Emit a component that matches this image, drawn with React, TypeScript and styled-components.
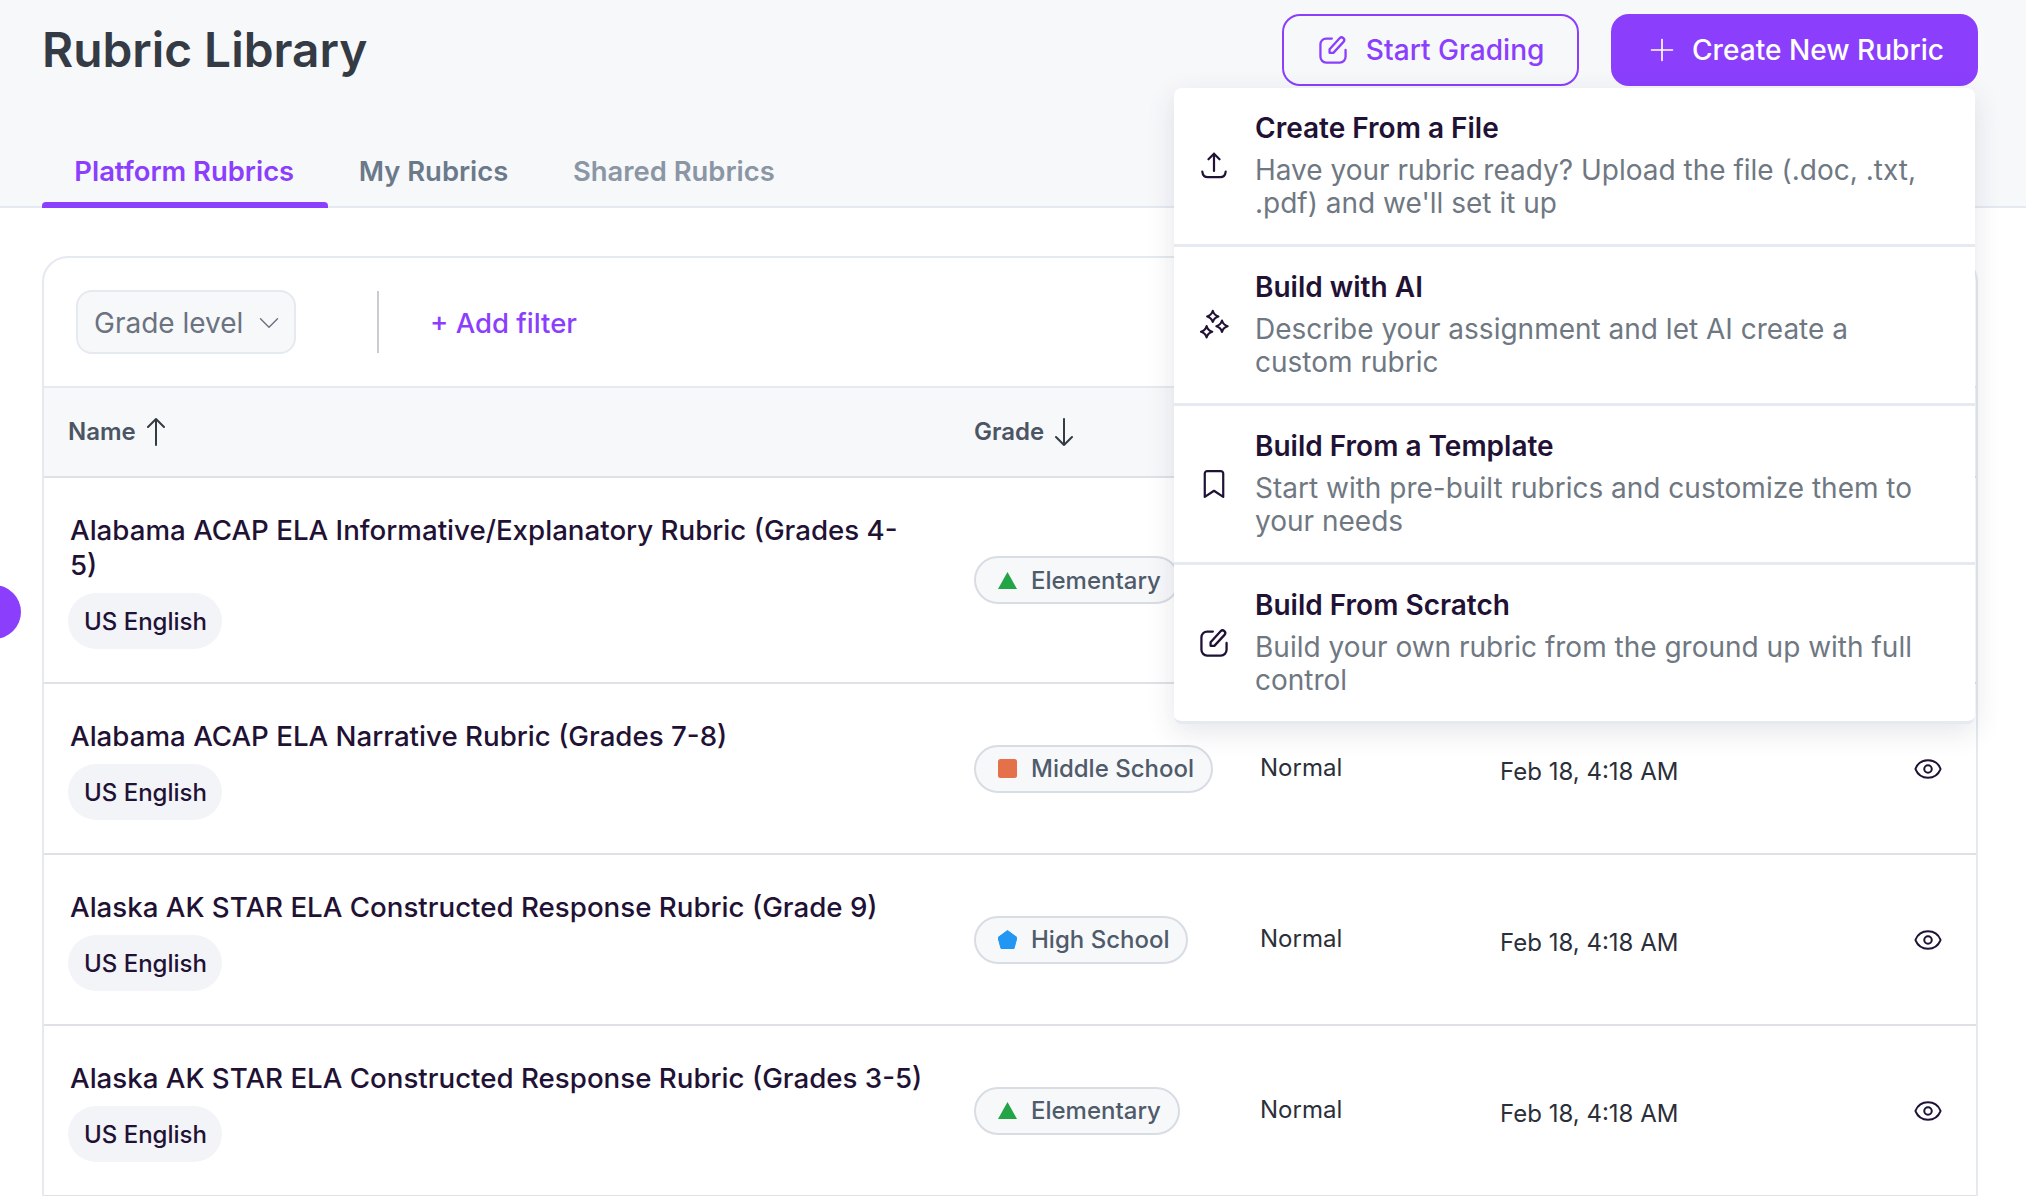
import { FC } from 'react';
import styled, { createGlobalStyle } from 'styled-components';
import { ChevronDown, Eye, Plus } from 'lucide-react';

const purple = '#8b3ffd';

const GlobalStyle = createGlobalStyle`
    html, body {
        margin: 0;
        height: 1196px;
        overflow: hidden;
        background: #fff;
        font-family: Inter, "Noto Sans", sans-serif;
    }
    * {
        box-sizing: border-box;
    }
`;

const Page = styled.div`
    position: relative;
    height: 1196px;
    overflow: hidden;
`;

const Header = styled.header`
    height: 208px;
    background: #f7f8fa;
    border-bottom: 2px solid #e5e9f0;
    padding: 14px 48px 0 42px;
    display: flex;
    flex-direction: column;
`;

const TopRow = styled.div`
    display: flex;
    justify-content: space-between;
    align-items: flex-start;
`;

const Title = styled.h1`
    margin: 0;
    padding-top: 7px;
    font-size: 47.8px;
    line-height: 58px;
    font-weight: 600;
    color: #343b44;
`;

const Actions = styled.div`
    position: relative;
    display: flex;
    gap: 32px;
`;

const ActionButton = styled.button<{ $solid?: boolean }>`
    height: 72px;
    display: flex;
    align-items: center;
    border-radius: 18px;
    border: 2px solid ${purple};
    background: ${({ $solid }) => ($solid ? purple : '#f7f8fa')};
    color: ${({ $solid }) => ($solid ? '#fff' : purple)};
    font: 500 28.1px Inter, sans-serif;
    padding: ${({ $solid }) => ($solid ? '0 32px 0 31px' : '0 32px 0 33px')};
    gap: ${({ $solid }) => ($solid ? '12.5px' : '17px')};
    white-space: nowrap;
`;

const Tabs = styled.nav`
    display: flex;
    margin-top: 54px;
    height: 66px;
`;

const Tab = styled.div<{ $color: string; $active?: boolean }>`
    position: relative;
    padding: 12.5px 32.3px 0;
    font-size: 27.4px;
    line-height: 36px;
    font-weight: 600;
    color: ${({ $color }) => $color};

    ${({ $active }) =>
        $active &&
        `
        &::after {
            content: '';
            position: absolute;
            left: 0;
            right: -2px;
            bottom: -2px;
            height: 6px;
            border-radius: 4px 4px 0 0;
            background: ${purple};
        }
    `}
`;

const Menu = styled.div`
    position: absolute;
    top: 74px;
    right: 3px;
    width: 801px;
    background: #fff;
    border-radius: 8px;
    border-bottom: 3px solid #e5e9f0;
    box-shadow: 0 8px 28px rgba(40, 50, 70, 0.12);
    z-index: 5;
`;

const MenuItem = styled.div`
    height: 159px;
    display: flex;
    align-items: center;
    padding: 0 40px 2px 24px;
    border-bottom: 3px solid #e5e9f0;

    &:last-child {
        height: 156px;
        border-bottom: 0;
    }
`;

const MenuIcon = styled.div`
    width: 57px;
    flex: none;
    display: flex;
    color: #1f1235;
    padding-top: 2px;
`;

const MenuTitle = styled.div`
    font-size: 28px;
    line-height: 36px;
    font-weight: 600;
    color: #1f1235;
    margin-bottom: 8px;
`;

const MenuDesc = styled.div`
    font-size: 28px;
    line-height: 33.5px;
    color: #6f7882;
`;

const Main = styled.main`
    padding: 48px 48px 0 42px;
`;

const Card = styled.section`
    border: 2px solid #e5e9f0;
    border-radius: 26px 26px 0 0;
    background: #fff;
`;

const FilterBar = styled.div`
    height: 130px;
    display: flex;
    align-items: center;
    padding-left: 32px;
    border-bottom: 2px solid #e5e9f0;
`;

const GradeSelect = styled.div`
    width: 220px;
    height: 64px;
    display: flex;
    align-items: center;
    justify-content: space-between;
    padding: 2px 8px 0 16px;
    background: #f7f8fa;
    border: 2px solid #e5e9f0;
    border-radius: 16px;
    font-size: 28px;
    color: #6b7280;
`;

const Divider = styled.div`
    width: 2px;
    height: 62px;
    margin: 0 51px 0 81px;
    background: #c9cdd3;
`;

const AddFilter = styled.div`
    padding-top: 2px;
    font-size: 27.5px;
    font-weight: 500;
    color: ${purple};
`;

const TableHead = styled.div`
    height: 90px;
    display: flex;
    align-items: center;
    background: #f7f8fa;
    border-bottom: 2px solid #dfe1e6;
`;

const HeadCell = styled.div<{ $width: number; $pad: number }>`
    width: ${({ $width }) => $width}px;
    padding-left: ${({ $pad }) => $pad}px;
    padding-bottom: 1px;
    display: flex;
    align-items: center;
    gap: 10px;
    font-size: 24px;
    font-weight: 600;
    color: #4b5563;
`;

const Row = styled.div`
    display: grid;
    grid-template-columns: 930px 286px 240px 1fr auto;
    align-items: center;
    border-bottom: 2px solid #dfe1e6;
`;

const NameCell = styled.div`
    padding: 35px 0 33px 24px;
`;

const RubricName = styled.div`
    max-width: 855px;
    padding-left: 2px;
    font-size: 27.7px;
    line-height: 35px;
    font-weight: 500;
    color: #1f1235;
`;

const LangChip = styled.span`
    display: inline-flex;
    align-items: center;
    height: 56px;
    margin-top: 10px;
    padding: 0 15.5px 0 16px;
    border-radius: 28px;
    background: #f3f4f8;
    font-size: 24px;
    font-weight: 500;
    color: #1f1235;
`;

const GradePill = styled.span`
    justify-self: start;
    display: inline-flex;
    align-items: center;
    gap: 14px;
    height: 48px;
    padding: 0 17px 0 22px;
    border: 2px solid #d8dce3;
    border-radius: 24px;
    background: #f7f8fa;
    font-size: 24px;
    font-weight: 500;
    color: #4f5b6b;
`;

const TextCell = styled.div<{ $shift: number }>`
    margin-top: ${({ $shift }) => $shift}px;
    font-size: 24px;
    color: #2b2f3a;
`;

const EyeCell = styled.div`
    display: flex;
    padding-right: 33px;
    color: #1f1235;
`;

const SideBlob = styled.div`
    position: absolute;
    left: -33px;
    top: 585px;
    width: 54px;
    height: 54px;
    border-radius: 50%;
    background: ${purple};
`;

const EditIcon: FC = () => (
    <svg width="32" height="32" viewBox="-1 -1 28 28" fill="none" stroke="currentColor" strokeWidth="2" strokeLinecap="round" strokeLinejoin="round">
        <path d="M12 3H7a5 5 0 0 0-5 5v11a5 5 0 0 0 5 5h12a5 5 0 0 0 5-5v-6" />
        <path d="M10 15.500v-3.200L18.800 2.800a2.300 2.300 0 0 1 3.400 3.100L13.300 15.500z" />
    </svg>
);

const UploadIcon = () => (
    <svg width="32" height="32" viewBox="0 0 26 26" fill="none" stroke="currentColor" strokeWidth="1.8" strokeLinecap="round" strokeLinejoin="round">
        <path d="M13 3v14M8.500 7.500 13 3l4.500 4.500" />
        <path d="M3.500 17.500c.3 3 1.900 4.500 4.500 4.500h10c2.600 0 4.200-1.500 4.500-4.500" />
    </svg>
);

const star = (x: number, y: number, r: number) =>
    `M${x} ${y - r}Q${x + 1} ${y - 1} ${x + r} ${y}Q${x + 1} ${y + 1} ${x} ${y + r}Q${x - 1} ${y + 1} ${x - r} ${y}Q${x - 1} ${y - 1} ${x} ${y - r}z`;

const SparkleIcon = () => (
    <svg width="32" height="32" viewBox="0 0 26 26" fill="none" stroke="currentColor" strokeWidth="1.7" strokeLinejoin="round">
        <path d={star(12, 6, 4.6)} />
        <path d={star(7, 18.5, 4.6)} />
        <path d={star(19.5, 14, 4.6)} />
    </svg>
);

const BookmarkIcon = () => (
    <svg width="32" height="32" viewBox="0 0 26 26" fill="none" stroke="currentColor" strokeWidth="1.8" strokeLinecap="round" strokeLinejoin="round">
        <path d="M7.500 2.500a2 2 0 0 0-2 2v19l7.500-5 7.500 5v-19a2 2 0 0 0-2-2z" />
    </svg>
);

const SortArrow: FC<{ down?: boolean }> = ({ down }) => (
    <svg width="20" height="28" viewBox="0 0 20 28" fill="none" stroke="#343b44" strokeWidth="2" strokeLinecap="round" strokeLinejoin="round">
        {down ? <path d="M10 1v26M2 19l8 8 8-8" /> : <path d="M10 1v26M2 9l8-8 8 8" />}
    </svg>
);

const GradeMark: FC<{ level: string }> = ({ level }) => {
    if (level === 'Middle School') {
        return (
            <svg width="19" height="19" viewBox="0 0 19 19">
                <rect width="19" height="19" rx="2.5" fill="#e5714a" />
            </svg>
        );
    }
    if (level === 'High School') {
        return (
            <svg width="19" height="19" viewBox="0 0 19 19">
                <path d="M9.500 0.500 19 7.500 16 18.500H3L0 7.500z" fill="#2196f3" stroke="#2196f3" strokeLinejoin="round" />
            </svg>
        );
    }
    return (
        <svg width="19" height="19" viewBox="0 0 19 19">
            <path d="M9.500 1 19 18H0z" fill="#22a447" />
        </svg>
    );
};

const menuItems = [
    { title: 'Create From a File', description: "Have your rubric ready? Upload the file (.doc, .txt, .pdf) and we'll set it up", icon: <UploadIcon /> },
    { title: 'Build with AI', description: 'Describe your assignment and let AI create a custom rubric', icon: <SparkleIcon /> },
    { title: 'Build From a Template', description: 'Start with pre-built rubrics and customize them to your needs', icon: <BookmarkIcon /> },
    { title: 'Build From Scratch', description: 'Build your own rubric from the ground up with full control', icon: <EditIcon /> },
];

const rubrics = [
    { name: 'Alabama ACAP ELA Informative/Explanatory Rubric (Grades 4-5)', level: 'Elementary' },
    { name: 'Alabama ACAP ELA Narrative Rubric (Grades 7-8)', level: 'Middle School' },
    { name: 'Alaska AK STAR ELA Constructed Response Rubric (Grade 9)', level: 'High School' },
    { name: 'Alaska AK STAR ELA Constructed Response Rubric (Grades 3-5)', level: 'Elementary' },
];

const App: FC = () => (
    <Page>
        <GlobalStyle />
        <Header>
            <TopRow>
                <Title>Rubric Library</Title>
                <Actions>
                    <ActionButton>
                        <EditIcon />
                        Start Grading
                    </ActionButton>
                    <ActionButton $solid>
                        <Plus size={36} strokeWidth={1.1} />
                        Create New Rubric
                    </ActionButton>
                    <Menu>
                        {menuItems.map(({ title, description, icon }) => (
                            <MenuItem key={title}>
                                <MenuIcon>{icon}</MenuIcon>
                                <div>
                                    <MenuTitle>{title}</MenuTitle>
                                    <MenuDesc>{description}</MenuDesc>
                                </div>
                            </MenuItem>
                        ))}
                    </Menu>
                </Actions>
            </TopRow>
            <Tabs>
                <Tab $color={purple} $active>Platform Rubrics</Tab>
                <Tab $color="#6b7a8a">My Rubrics</Tab>
                <Tab $color="#8b96a5">Shared Rubrics</Tab>
            </Tabs>
        </Header>
        <Main>
            <Card>
                <FilterBar>
                    <GradeSelect>
                        Grade level
                        <ChevronDown size={34} strokeWidth={1} />
                    </GradeSelect>
                    <Divider />
                    <AddFilter>+ Add filter</AddFilter>
                </FilterBar>
                <TableHead>
                    <HeadCell $width={930} $pad={24}>
                        Name
                        <SortArrow />
                    </HeadCell>
                    <HeadCell $width={200} $pad={0}>
                        Grade
                        <SortArrow down />
                    </HeadCell>
                </TableHead>
                {rubrics.map(({ name, level }) => (
                    <Row key={name}>
                        <NameCell>
                            <RubricName>{name}</RubricName>
                            <LangChip>US English</LangChip>
                        </NameCell>
                        <GradePill>
                            <GradeMark level={level} />
                            {level}
                        </GradePill>
                        <TextCell $shift={-2}>Normal</TextCell>
                        <TextCell $shift={5}>Feb 18, 4:18 AM</TextCell>
                        <EyeCell>
                            <Eye size={30} strokeWidth={1.6} />
                        </EyeCell>
                    </Row>
                ))}
            </Card>
        </Main>
        <SideBlob />
    </Page>
);

export default App;
